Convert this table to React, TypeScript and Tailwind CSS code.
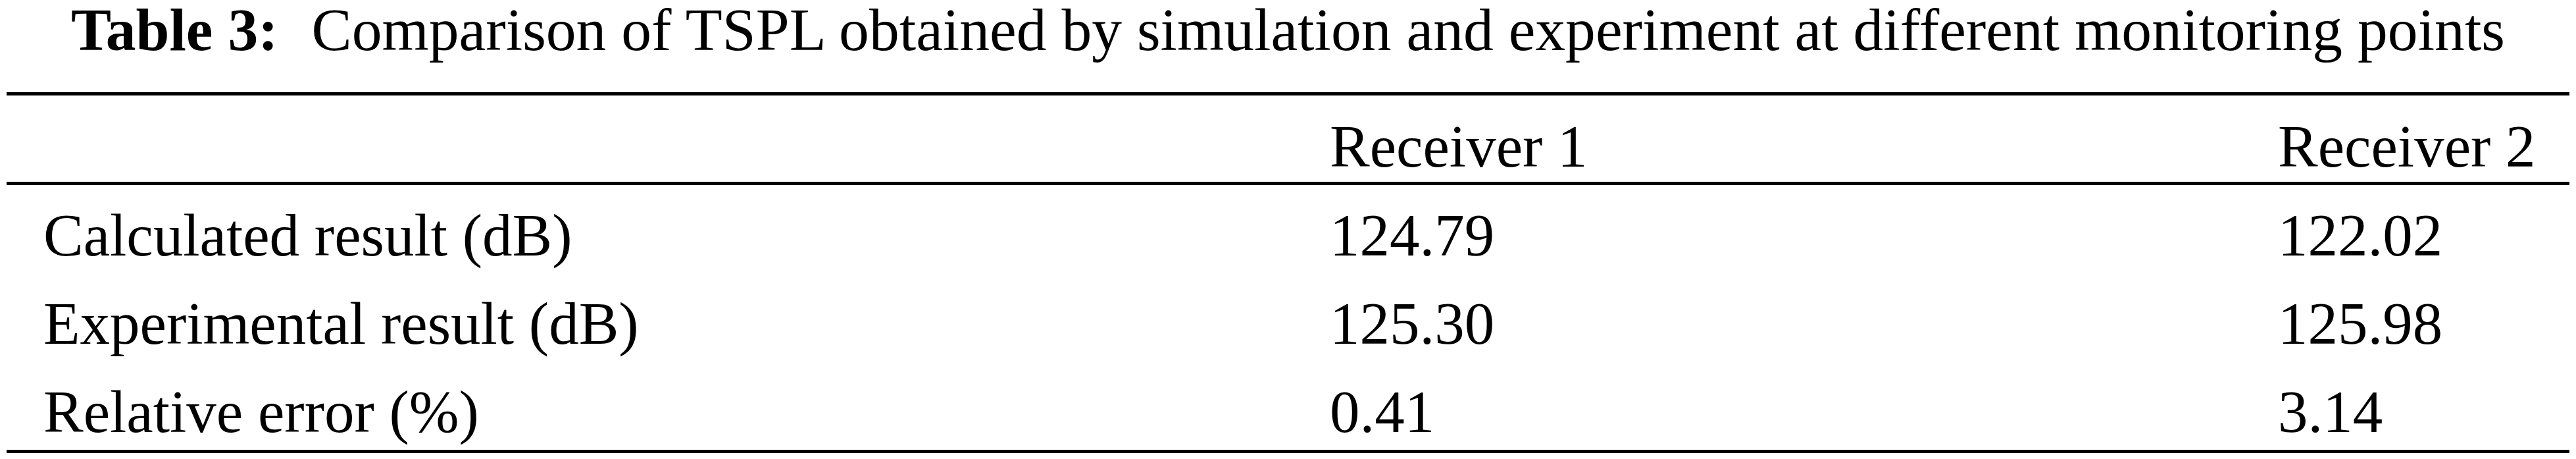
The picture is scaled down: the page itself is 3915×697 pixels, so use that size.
const rows = [
  { label: 'Calculated result (dB)', r1: '124.79', r2: '122.02' },
  { label: 'Experimental result (dB)', r1: '125.30', r2: '125.98' },
  { label: 'Relative error (%)', r1: '0.41', r2: '3.14' },
];

export default function App() {
  return (
    <div className="bg-white text-black font-['Liberation_Serif','Times_New_Roman',serif] text-[91px] leading-[90px] w-[3915px] h-[697px] pl-[10px]">
      <div className="w-[3895px]">
        {/* Caption */}
        <div className="text-center whitespace-pre text-[91.6px]">
          <span className="font-bold pr-[28px]">Table 3:</span> Comparison of TSPL obtained by simulation and experiment at different monitoring points
        </div>

        {/* Table */}
        <div className="mt-[50px] border-t-[5px] border-b-[5px] border-black">
          <div className="grid grid-cols-[2011px_1441px_1fr] border-b-[5px] border-black pt-[33px] pb-[8px]">
            <div />
            <div>Receiver 1</div>
            <div>Receiver 2</div>
          </div>
          {rows.map((row) => (
            <div key={row.label} className="grid grid-cols-[2011px_1441px_1fr] pt-[32px] pb-[12px]">
              <div className="pl-[56px]">{row.label}</div>
              <div>{row.r1}</div>
              <div>{row.r2}</div>
            </div>
          ))}
        </div>
      </div>
    </div>
  );
}
